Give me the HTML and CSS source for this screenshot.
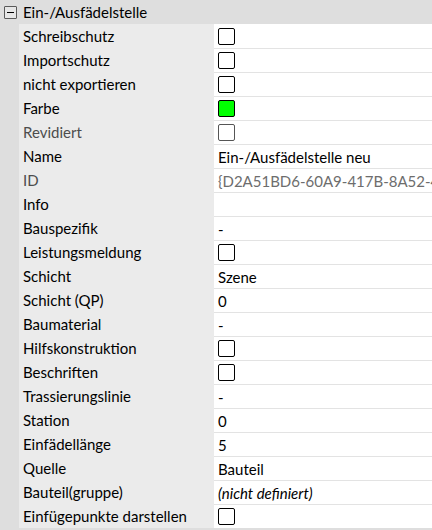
FILE: index.html
```html
<!DOCTYPE html>
<html lang="de">
<head>
<meta charset="utf-8">
<link rel="stylesheet" href="styles.css">
</head>
<body>
<div class="panel">
  <div class="header">
    <span class="toggle"><span class="minus"></span></span>
    <span class="title">Ein-/Ausfädelstelle</span>
  </div>
  <div class="rows">
    <div class="row"><div class="label">Schreibschutz</div><div class="value"><span class="cb"></span></div></div>
    <div class="row"><div class="label">Importschutz</div><div class="value"><span class="cb"></span></div></div>
    <div class="row"><div class="label">nicht exportieren</div><div class="value"><span class="cb"></span></div></div>
    <div class="row"><div class="label">Farbe</div><div class="value"><span class="cb color"></span></div></div>
    <div class="row"><div class="label dis">Revidiert</div><div class="value"><span class="cb cb-dis"></span></div></div>
    <div class="row"><div class="label">Name</div><div class="value">Ein-/Ausfädelstelle neu</div></div>
    <div class="row"><div class="label dis">ID</div><div class="value val-dis">{D2A51BD6-60A9-417B-8A52-40C3E19F8B21}</div></div>
    <div class="row"><div class="label">Info</div><div class="value"></div></div>
    <div class="row"><div class="label">Bauspezifik</div><div class="value">-</div></div>
    <div class="row"><div class="label">Leistungsmeldung</div><div class="value"><span class="cb"></span></div></div>
    <div class="row"><div class="label">Schicht</div><div class="value">Szene</div></div>
    <div class="row"><div class="label">Schicht (QP)</div><div class="value">0</div></div>
    <div class="row"><div class="label">Baumaterial</div><div class="value">-</div></div>
    <div class="row"><div class="label">Hilfskonstruktion</div><div class="value"><span class="cb"></span></div></div>
    <div class="row"><div class="label">Beschriften</div><div class="value"><span class="cb"></span></div></div>
    <div class="row"><div class="label">Trassierungslinie</div><div class="value">-</div></div>
    <div class="row"><div class="label">Station</div><div class="value">0</div></div>
    <div class="row"><div class="label">Einfädellänge</div><div class="value">5</div></div>
    <div class="row"><div class="label">Quelle</div><div class="value">Bauteil</div></div>
    <div class="row"><div class="label">Bauteil(gruppe)</div><div class="value"><em>(nicht definiert)</em></div></div>
    <div class="row"><div class="label">Einfügepunkte darstellen</div><div class="value"><span class="cb"></span></div></div>
  </div>
</div>
</body>
</html>
```

FILE: styles.css
```css
html, body {
  margin: 0;
  padding: 0;
  background: #dedede;
}
body {
  font-family: Lato, "Noto Sans", sans-serif;
  font-size: 15px;
  color: #000;
  width: 432px;
  height: 530px;
  overflow: hidden;
}
.panel {
  width: 432px;
}
.header {
  height: 24px;
  display: flex;
  align-items: center;
  padding-left: 4px;
  gap: 6px;
}
.toggle {
  width: 11px;
  height: 11px;
  border: 1px solid #5a5a5a;
  border-radius: 1px;
  display: flex;
  align-items: center;
  justify-content: center;
  background: #e6e6e6;
}
.minus {
  width: 7px;
  height: 1px;
  background: #000;
}
.rows {
  margin-left: 19px;
}
.row {
  display: grid;
  grid-template-columns: 195px 1fr;
  height: 24px;
}
.row + .row .value {
  border-top: 1px solid #e3e3e3;
}
.label {
  background: #ebebeb;
  padding-left: 4px;
  display: flex;
  align-items: center;
  white-space: nowrap;
  overflow: hidden;
}
.label.dis {
  color: #4d4d4d;
}
.value {
  background: #fff;
  padding-left: 4px;
  display: flex;
  align-items: center;
  white-space: nowrap;
  overflow: hidden;
}
.val-dis {
  color: #6d6d6d;
}
.cb {
  width: 15px;
  height: 15px;
  border: 1px solid #000;
  border-radius: 2px;
  background: #fff;
  flex: none;
}
.cb-dis {
  border-color: #555;
}
.cb.color {
  background: #00ff00;
}
```
